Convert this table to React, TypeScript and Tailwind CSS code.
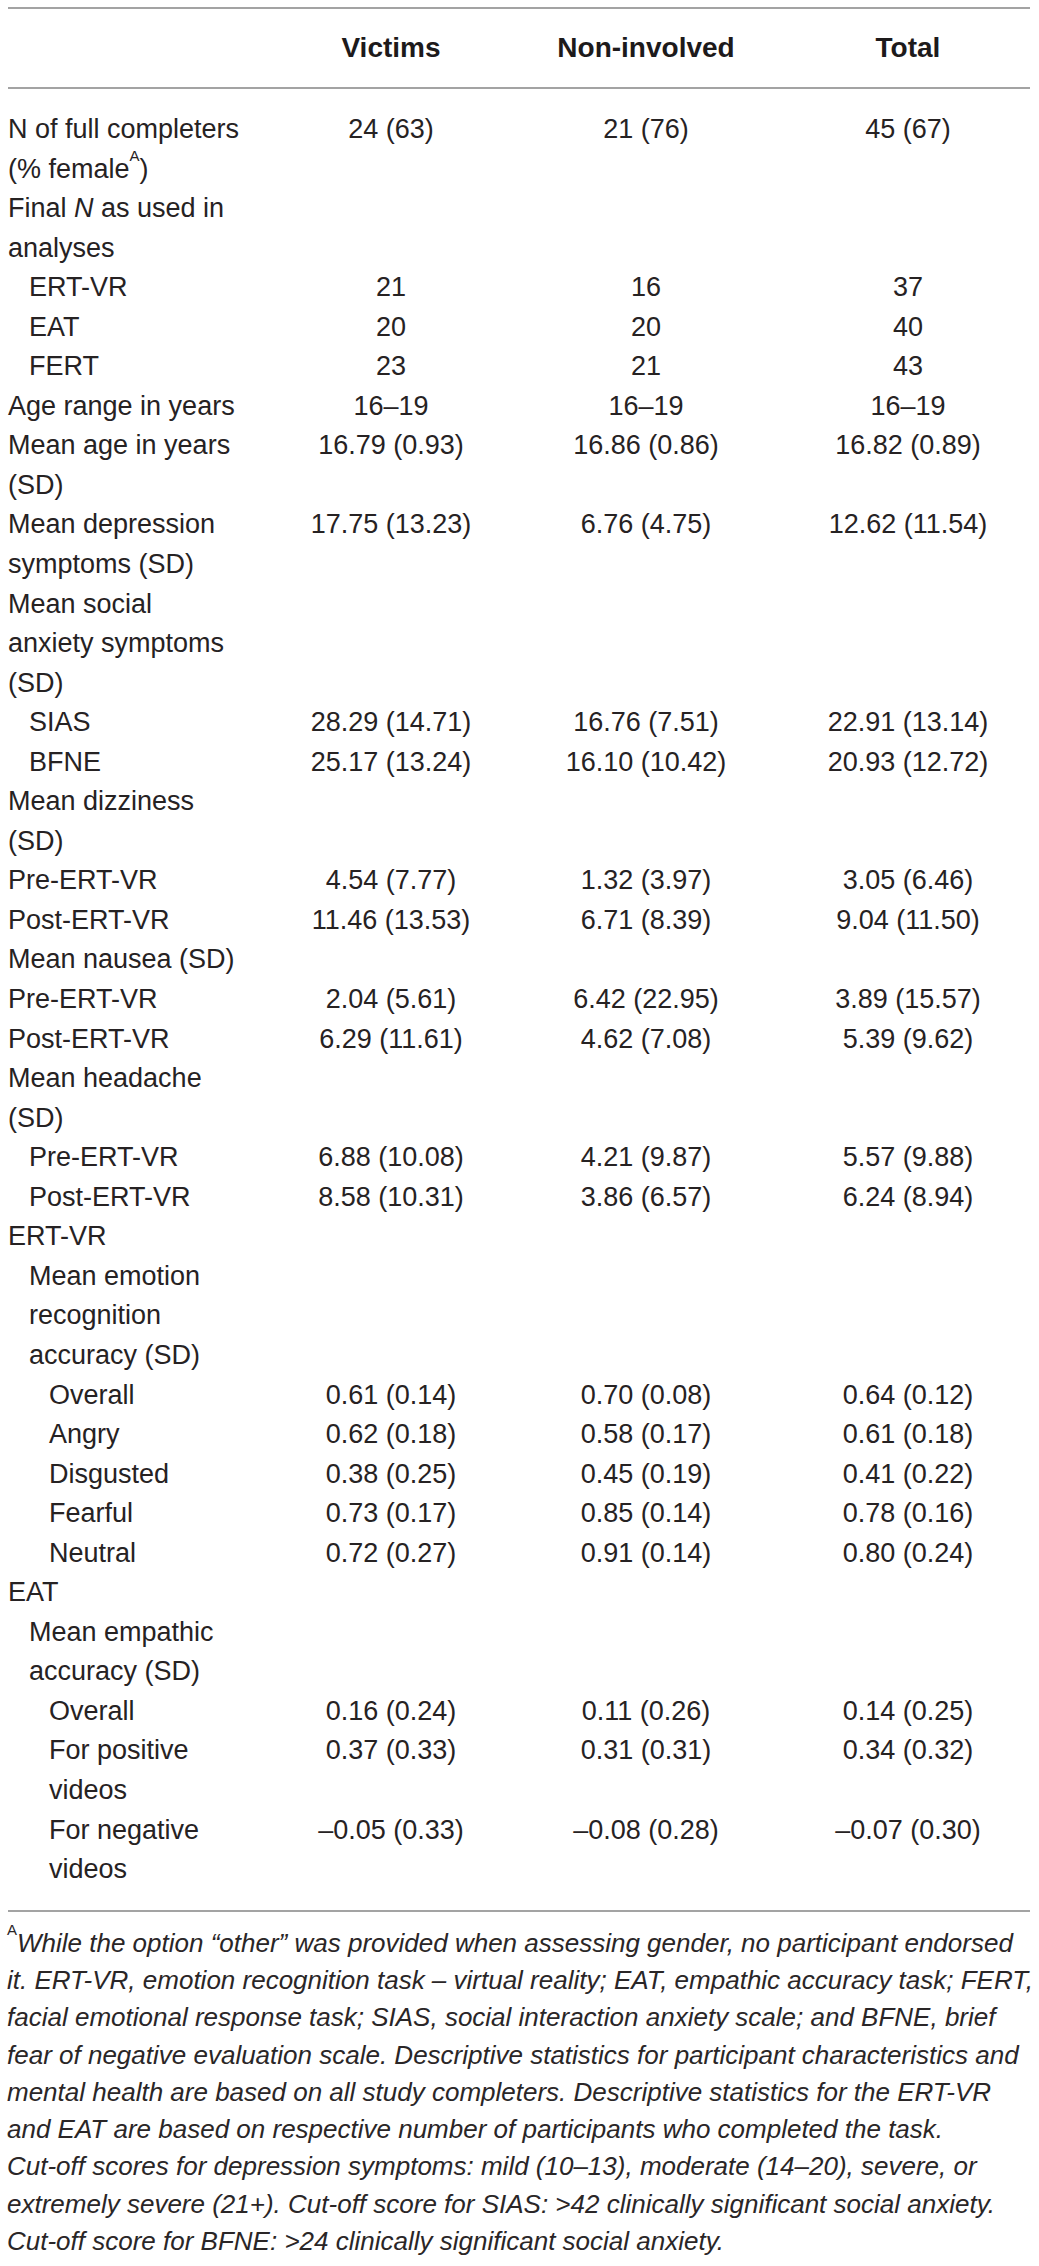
import React from 'react'

type Row = {
  label: React.ReactNode[]
  indent?: 0 | 1 | 2
  values?: [string, string, string]
}

const ROWS: Row[] = [
  {
    label: [
      'N of full completers',
      <>
        (% female<sup className="text-[15px] align-[9px]">A</sup>)
      </>,
    ],
    values: ['24 (63)', '21 (76)', '45 (67)'],
  },
  {
    label: [
      <>
        Final <i>N</i> as used in
      </>,
      'analyses',
    ],
  },
  { label: ['ERT-VR'], indent: 1, values: ['21', '16', '37'] },
  { label: ['EAT'], indent: 1, values: ['20', '20', '40'] },
  { label: ['FERT'], indent: 1, values: ['23', '21', '43'] },
  { label: ['Age range in years'], values: ['16–19', '16–19', '16–19'] },
  { label: ['Mean age in years', '(SD)'], values: ['16.79 (0.93)', '16.86 (0.86)', '16.82 (0.89)'] },
  { label: ['Mean depression', 'symptoms (SD)'], values: ['17.75 (13.23)', '6.76 (4.75)', '12.62 (11.54)'] },
  { label: ['Mean social', 'anxiety symptoms', '(SD)'] },
  { label: ['SIAS'], indent: 1, values: ['28.29 (14.71)', '16.76 (7.51)', '22.91 (13.14)'] },
  { label: ['BFNE'], indent: 1, values: ['25.17 (13.24)', '16.10 (10.42)', '20.93 (12.72)'] },
  { label: ['Mean dizziness', '(SD)'] },
  { label: ['Pre-ERT-VR'], values: ['4.54 (7.77)', '1.32 (3.97)', '3.05 (6.46)'] },
  { label: ['Post-ERT-VR'], values: ['11.46 (13.53)', '6.71 (8.39)', '9.04 (11.50)'] },
  { label: ['Mean nausea (SD)'] },
  { label: ['Pre-ERT-VR'], values: ['2.04 (5.61)', '6.42 (22.95)', '3.89 (15.57)'] },
  { label: ['Post-ERT-VR'], values: ['6.29 (11.61)', '4.62 (7.08)', '5.39 (9.62)'] },
  { label: ['Mean headache', '(SD)'] },
  { label: ['Pre-ERT-VR'], indent: 1, values: ['6.88 (10.08)', '4.21 (9.87)', '5.57 (9.88)'] },
  { label: ['Post-ERT-VR'], indent: 1, values: ['8.58 (10.31)', '3.86 (6.57)', '6.24 (8.94)'] },
  { label: ['ERT-VR'] },
  { label: ['Mean emotion', 'recognition', 'accuracy (SD)'], indent: 1 },
  { label: ['Overall'], indent: 2, values: ['0.61 (0.14)', '0.70 (0.08)', '0.64 (0.12)'] },
  { label: ['Angry'], indent: 2, values: ['0.62 (0.18)', '0.58 (0.17)', '0.61 (0.18)'] },
  { label: ['Disgusted'], indent: 2, values: ['0.38 (0.25)', '0.45 (0.19)', '0.41 (0.22)'] },
  { label: ['Fearful'], indent: 2, values: ['0.73 (0.17)', '0.85 (0.14)', '0.78 (0.16)'] },
  { label: ['Neutral'], indent: 2, values: ['0.72 (0.27)', '0.91 (0.14)', '0.80 (0.24)'] },
  { label: ['EAT'] },
  { label: ['Mean empathic', 'accuracy (SD)'], indent: 1 },
  { label: ['Overall'], indent: 2, values: ['0.16 (0.24)', '0.11 (0.26)', '0.14 (0.25)'] },
  { label: ['For positive', 'videos'], indent: 2, values: ['0.37 (0.33)', '0.31 (0.31)', '0.34 (0.32)'] },
  { label: ['For negative', 'videos'], indent: 2, values: ['–0.05 (0.33)', '–0.08 (0.28)', '–0.07 (0.30)'] },
]

const NOTE_LINES: React.ReactNode[] = [
  <>
    <sup className="not-italic text-[15px] align-[9px]">A</sup>While the option “other” was provided when assessing gender, no participant endorsed
  </>,
  'it. ERT-VR, emotion recognition task – virtual reality; EAT, empathic accuracy task; FERT,',
  'facial emotional response task; SIAS, social interaction anxiety scale; and BFNE, brief',
  'fear of negative evaluation scale. Descriptive statistics for participant characteristics and',
  'mental health are based on all study completers. Descriptive statistics for the ERT-VR',
  'and EAT are based on respective number of participants who completed the task.',
  'Cut-off scores for depression symptoms: mild (10–13), moderate (14–20), severe, or',
  'extremely severe (21+). Cut-off score for SIAS: >42 clinically significant social anxiety.',
  'Cut-off score for BFNE: >24 clinically significant social anxiety.',
]

const indentClass = (i?: number) => (i === 2 ? 'pl-[41px]' : i === 1 ? 'pl-[21px]' : 'pl-0')

export default function App() {
  return (
    <div className="w-[1039px] min-h-[2266px] bg-white pt-[7px] text-[#262223] font-['Liberation_Sans',Arial,sans-serif]">
      <div className="ml-[8px] w-[1022px]">
        <div className="h-[2px] bg-[#a3a3a3]" />

        {/* header */}
        <div className="grid grid-cols-[268px_230px_280px_244px] h-[78px] items-center text-[28px] font-bold text-[#1d1a1b]">
          <div />
          <div className="text-center">Victims</div>
          <div className="text-center">Non-involved</div>
          <div className="text-center">Total</div>
        </div>
        <div className="h-[2px] bg-[#a3a3a3]" />

        {/* body */}
        <div className="pt-[21px] pb-[20px] text-[27px] leading-[39.55px]">
          {ROWS.map((row, idx) => (
            <div key={idx} className="grid grid-cols-[268px_230px_280px_244px]">
              <div className={`${indentClass(row.indent)} whitespace-nowrap`}>
                {row.label.map((line, j) => (
                  <div key={j}>{line}</div>
                ))}
              </div>
              {row.values ? (
                row.values.map((v, j) => (
                  <div key={j} className="text-center whitespace-nowrap">
                    {v}
                  </div>
                ))
              ) : (
                <>
                  <div />
                  <div />
                  <div />
                </>
              )}
            </div>
          ))}
        </div>
        <div className="h-[2px] bg-[#a3a3a3]" />
      </div>

      {/* footnote */}
      <div className="pl-[7px] pt-[13px] italic text-[26px] leading-[37.3px] text-[#2a2627]">
        {NOTE_LINES.map((line, i) => (
          <div key={i} className="whitespace-nowrap">
            {line}
          </div>
        ))}
      </div>
    </div>
  )
}
